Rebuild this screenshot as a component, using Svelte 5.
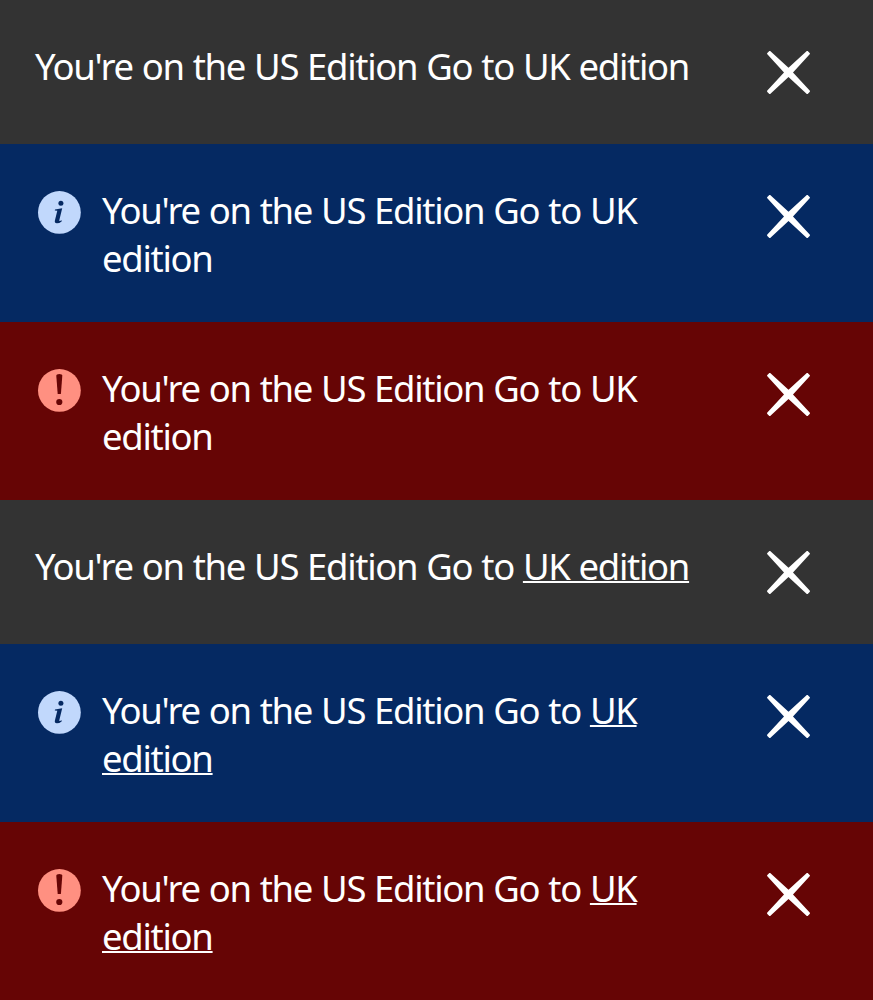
<script>
  const notices = [
    { type: 'plain', link: false },
    { type: 'info', link: false },
    { type: 'error', link: false },
    { type: 'plain', link: true },
    { type: 'info', link: true },
    { type: 'error', link: true }
  ];
</script>

<main>
  {#each notices as n}
    <section class="notice {n.type}">
      {#if n.type === 'info'}
        <svg class="badge" viewBox="0 0 44 44" aria-hidden="true">
          <circle cx="22.4" cy="22.4" r="21.4" fill="#c1d8fc" />
          <circle cx="23.9" cy="13.2" r="2.5" fill="#052962" />
          <path d="M18 19.5L25.2 18.2L22.3 30.2Q22.1 31.2 22.9 31L24.8 30.3L24.6 31.4Q22.1 33.4 19.8 33.3Q17.3 33.2 17.9 30.5L20.3 20.8L17.8 20.4Z" fill="#052962" />
        </svg>
      {:else if n.type === 'error'}
        <svg class="badge" viewBox="0 0 44 44" aria-hidden="true">
          <circle cx="22.4" cy="22.4" r="21.4" fill="#ff9081" />
          <path d="M19.3 7.8Q19.3 6 22.3 6Q25.3 6 25.3 7.8L23.9 26.1H20.7Z" fill="#660505" />
          <circle cx="22.3" cy="34" r="3.1" fill="#660505" />
        </svg>
      {/if}
      <p>You're on the US Edition Go to {#if n.link}<a href="#uk">UK edition</a>{:else}UK edition{/if}</p>
      <button aria-label="Dismiss">
        <svg viewBox="0 0 44 44" aria-hidden="true">
          <path d="M1.1 3.3L3.3 1.1H4.2L22.5 17.8L40.8 1.1H41.7L43.9 3.3V4.1L27 22.5L43.9 40.8V41.7L41.7 43.9H40.8L22.5 27L4.2 43.9H3.3L1.1 41.7V40.8L18 22.5L1.1 4.1Z" fill="#fff" />
        </svg>
      </button>
    </section>
  {/each}
</main>

<style>
  :global(body) { margin: 0; }
  main { width: 100%; overflow: hidden; }
  .notice {
    box-sizing: border-box;
    display: flex;
    align-items: flex-start;
    height: 178px;
    padding: 42px 63px 0 35px;
    color: #fff;
  }
  .plain { height: 144px; background: #333; }
  .info { background: #052962; }
  .error { background: #660505; }
  .badge { flex: none; width: 44px; height: 44px; margin: 4px 21px 0 2px; }
  p {
    flex: 1;
    margin: 0;
    padding-right: 66px;
    font: 400 36.5px/48px "Noto Sans", sans-serif;
    letter-spacing: -1.3px;
    word-spacing: 0.75px;
  }
  a {
    color: inherit;
    text-decoration: underline;
    text-decoration-thickness: 2px;
    text-underline-offset: 0.5px;
    text-decoration-skip-ink: none;
  }
  button {
    flex: none;
    width: 44px;
    height: 44px;
    margin: 8px 0 0;
    padding: 0;
    border: 0;
    background: none;
  }
  button svg { display: block; width: 44px; height: 44px; }
</style>
